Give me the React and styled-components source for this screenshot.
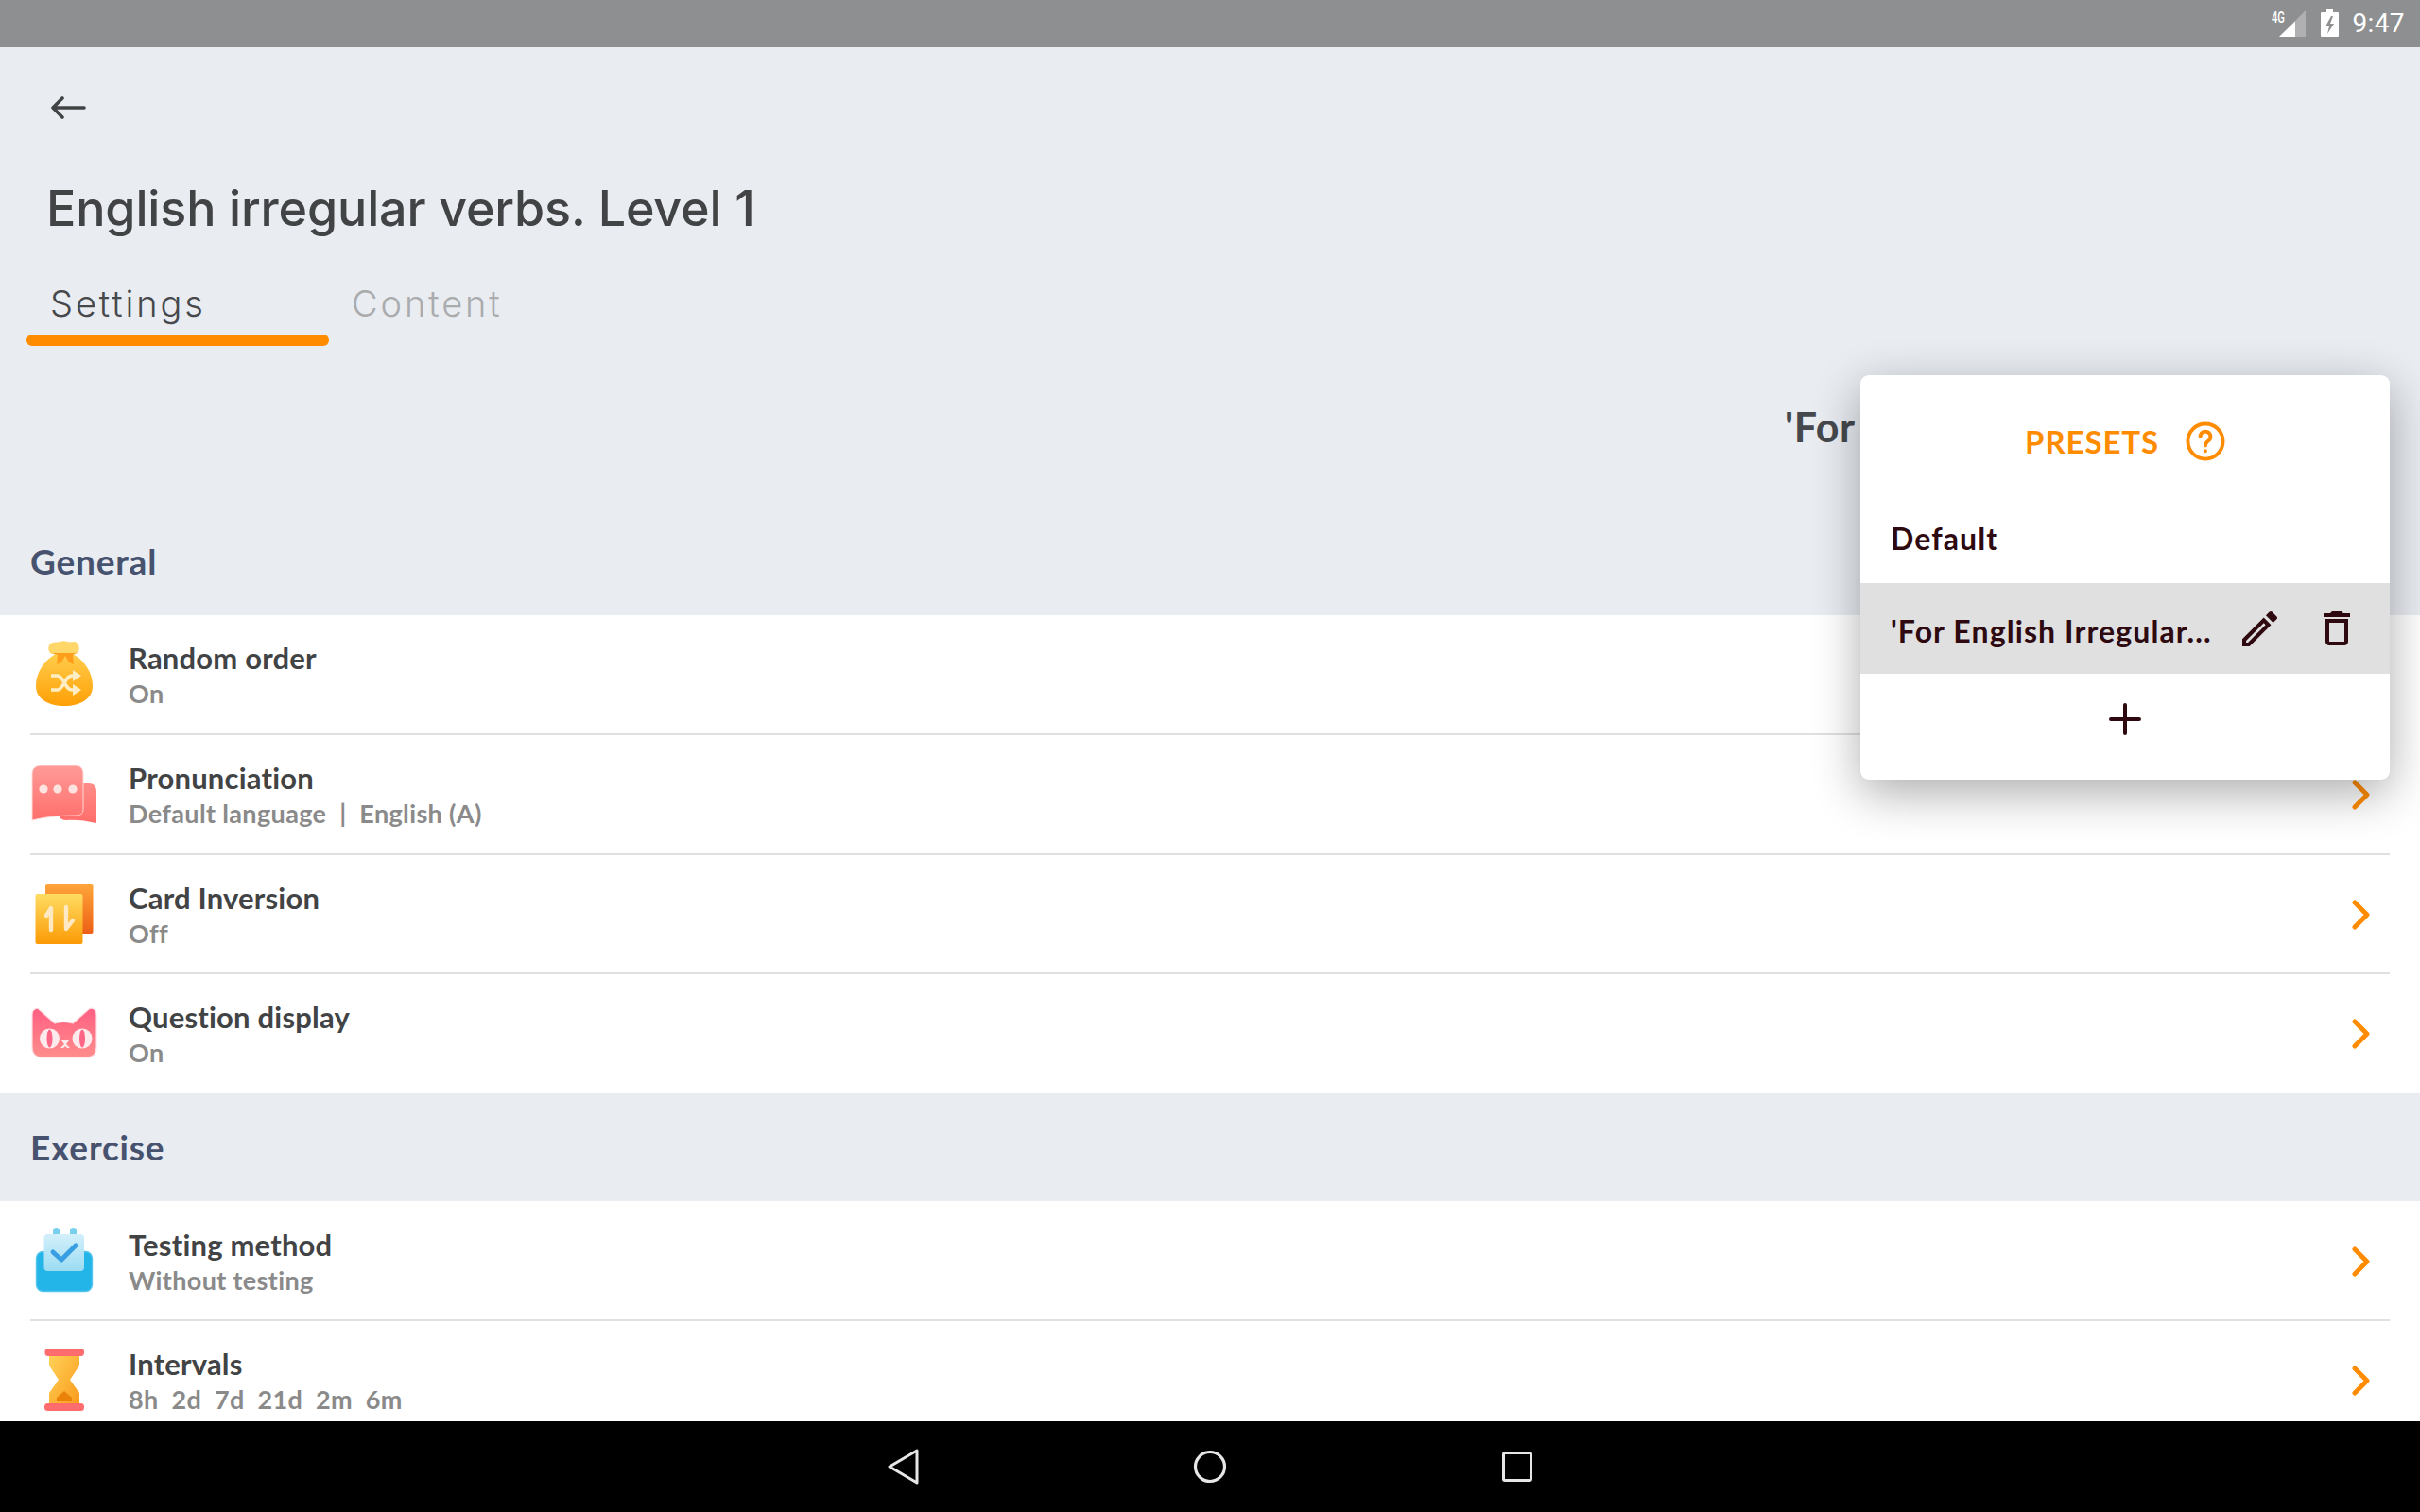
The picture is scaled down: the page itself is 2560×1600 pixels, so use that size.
import React from "react";
import styled, { createGlobalStyle } from "styled-components";

const Global = createGlobalStyle`
  html, body { margin: 0; padding: 0; background: #e9ecf1; }
  * { box-sizing: border-box; }
`;

const Screen = styled.div`
  width: 2560px;
  height: 1600px;
  display: flex;
  flex-direction: column;
  overflow: hidden;
  font-family: "Lato", "Noto Sans", sans-serif;
`;

const StatusBar = styled.div`
  height: 50px;
  flex: none;
  background: #8e8f91;
  display: flex;
  align-items: center;
  justify-content: flex-end;
  padding-right: 16px;
`;
const StatusIcons = styled.svg`
  display: block;
  margin-right: 13px;
`;
const Clock = styled.span`
  font: 400 28px/50px "Roboto", sans-serif;
  color: #fff;
  letter-spacing: 0.4px;
`;

const Main = styled.main`
  flex: 1;
  min-height: 0;
  position: relative;
  overflow: hidden;
  background: #e9ecf1;
`;

const Head = styled.header`
  height: 487px;
  display: flex;
  flex-direction: column;
`;
const BackButton = styled.div`
  padding: 52px 0 0 53px;
  height: 94px;
  svg { display: block; }
`;
const Title = styled.h1`
  margin: 45px 0 0 49px;
  font: 500 52px/64px "Inter", sans-serif;
  color: #414345;
  letter-spacing: -0.15px;
`;
const Tabs = styled.div`
  display: flex;
  margin: 45px 0 0 28px;
`;
const Tab = styled.div`
  width: 320px;
  height: 68px;
  display: flex;
  flex-direction: column;
  justify-content: space-between;
  font: 300 38px/46px "Inter", sans-serif;
  letter-spacing: 2.9px;
  color: ${(p) => (p.$active ? "#46484b" : "#a9abad")};
`;
const TabLabel = styled.span`
  padding-left: ${(p) => (p.$active ? 25 : 24)}px;
`;
const TabBar = styled.span`
  display: block;
  height: 12px;
  border-radius: 6px;
  background: #ff8c00;
`;
const PresetName = styled.div`
  margin: 58px 0 0 1888px;
  font: 700 43px/56px "Lato", sans-serif;
  letter-spacing: 0.6px;
  color: #45494d;
  white-space: nowrap;
`;

const SectionTitle = styled.h2`
  margin: 0;
  height: 114px;
  padding-left: 32px;
  display: flex;
  align-items: center;
  font: 700 37px/40px "Lato", sans-serif;
  letter-spacing: 0.8px;
  color: #47526f;
`;
const List = styled.div`
  background: #fff;
`;
const Row = styled.div`
  height: ${(p) => (p.$last ? "126px" : "126.75px")};
  padding: 0 32px;
  display: flex;
  align-items: center;
  position: relative;
  &::after {
    content: "";
    display: ${(p) => (p.$last ? "none" : "block")};
    position: absolute;
    left: 32px;
    right: 32px;
    bottom: 0;
    height: 2px;
    background: #e0e0e0;
  }
`;
const IconSlot = styled.div`
  width: 104px;
  flex: none;
  svg { display: block; }
`;
const RowText = styled.div`
  flex: 1;
  min-width: 0;
`;
const RowTitle = styled.div`
  font: 700 31px/40px "Lato", sans-serif;
  letter-spacing: 0.2px;
  color: #414345;
`;
const RowSub = styled.div`
  font: 700 27px/36px "Lato", sans-serif;
  letter-spacing: 0.35px;
  color: #8a8a8a;
  white-space: pre;
`;
const Chevron = styled.svg`
  flex: none;
  display: block;
  margin-right: 20px;
`;

const Popup = styled.aside`
  position: absolute;
  left: 1968px;
  top: 347px;
  width: 560px;
  height: 428px;
  background: #fff;
  border-radius: 9px;
  box-shadow: 0 14px 50px rgba(0, 0, 0, 0.33);
  display: flex;
  flex-direction: column;
`;
const PopupHead = styled.div`
  height: 126px;
  padding-top: 14px;
  display: flex;
  align-items: center;
  justify-content: center;
  gap: 28px;
  font: 700 33px/40px "Lato", sans-serif;
  letter-spacing: 0.9px;
  color: #ff8c00;
`;
const PresetRow = styled.div`
  height: ${(p) => p.$h}px;
  padding: 0 42px 0 32px;
  display: flex;
  align-items: center;
  background: ${(p) => (p.$selected ? "#e0e0e0" : "transparent")};
  font: 700 32px/40px "Lato", sans-serif;
  letter-spacing: 1.1px;
  color: #2e0a10;
`;
const PresetLabel = styled.span`
  flex: 1;
  min-width: 0;
  white-space: nowrap;
  padding-top: ${(p) => (p.$drop ? 6 : 0)}px;
`;
const ActionIcon = styled.svg`
  display: block;
  flex: none;
  margin-left: ${(p) => p.$ml}px;
`;
const AddRow = styled.div`
  flex: 1;
  display: flex;
  align-items: flex-start;
  justify-content: center;
  padding-top: 31px;
`;

const NavBar = styled.nav`
  height: 96px;
  flex: none;
  background: #000;
  display: flex;
  align-items: center;
  justify-content: center;
  gap: 290px;
`;

const Bag = () => (
  <svg width="72" height="72" viewBox="0 0 72 72">
    <defs>
      <linearGradient id="bag" x1="0" y1="0" x2="0" y2="1">
        <stop offset="0" stopColor="#ffd050" />
        <stop offset="1" stopColor="#ff9f05" />
      </linearGradient>
    </defs>
    <path d="M36 11C20 14 6 30 6 48c0 14 14 21 30 21s30-7 30-21C66 30 52 14 36 11z" fill="url(#bag)" />
    <path d="M24 2c3-1 5 0 7-1 3-1 6-1 8 0 3 1 5 0 8 0 5 1 6 9 3 12-7 3-24 3-29 0-3-4-2-10 3-11z" fill="#ffd768" />
    <path d="M23 13h26l-4 2 1 10-5-2-4-7-4 7-5 2 1-10z" fill="#ff9e1a" />
    <g fill="none" stroke="#ffeec4" strokeWidth="3.6">
      <path d="M22 37h7c6 0 8 15 15 15h4" />
      <path d="M22 52h7c6 0 8-15 15-15h4" />
    </g>
    <path d="M45 31l9 6-9 6zM45 46l9 6-9 6z" fill="#ffeec4" />
  </svg>
);
const Bubbles = () => (
  <svg width="72" height="72" viewBox="0 0 72 72">
    <defs>
      <linearGradient id="bub1" x1="0" y1="0" x2="0" y2="1">
        <stop offset="0" stopColor="#ff9b98" />
        <stop offset="1" stopColor="#ff6f6c" />
      </linearGradient>
      <linearGradient id="bub2" x1="0" y1="0" x2="0" y2="1">
        <stop offset="0" stopColor="#ff8c88" />
        <stop offset="1" stopColor="#ff6d6a" />
      </linearGradient>
    </defs>
    <path d="M30 24h32c5 0 8 3 8 8v34c-12-3-24-4-32-3-5 0-8-3-8-8z" fill="url(#bub2)" />
    <path d="M12 5h35c6 0 9 3 9 9v37c0 5-3 7-8 7-15 0-30 1-46 5V14c0-6 4-9 10-9z" fill="url(#bub1)" stroke="#ffd9d6" strokeWidth="1" />
    <circle cx="14" cy="30" r="4.6" fill="#ffe3e1" />
    <circle cx="29" cy="30" r="4.6" fill="#ffe3e1" />
    <circle cx="45" cy="30" r="4.6" fill="#ffe3e1" />
  </svg>
);
const Cards = () => (
  <svg width="72" height="72" viewBox="0 0 72 72">
    <defs>
      <linearGradient id="cb" x1="0" y1="0" x2="0" y2="1">
        <stop offset="0" stopColor="#ffa63a" />
        <stop offset="1" stopColor="#ec5f16" />
      </linearGradient>
      <linearGradient id="cf" x1="0" y1="0" x2="0" y2="1">
        <stop offset="0" stopColor="#ffdc62" />
        <stop offset="1" stopColor="#fb9a05" />
      </linearGradient>
    </defs>
    <rect x="16" y="3" width="50.5" height="53" rx="2" fill="url(#cb)" />
    <rect x="5.5" y="14" width="50" height="53" rx="2" fill="url(#cf)" />
    <path d="M17 37l5-8v23" fill="none" stroke="#ffe9c4" strokeWidth="4.4" strokeLinecap="round" strokeLinejoin="round" />
    <path d="M38 28v23l7-9" fill="none" stroke="#ffe9c4" strokeWidth="4.4" strokeLinecap="round" strokeLinejoin="round" />
  </svg>
);
const Cat = () => (
  <svg width="72" height="72" viewBox="0 0 72 72">
    <defs>
      <linearGradient id="cat" x1="0" y1="0" x2="0" y2="1">
        <stop offset="0" stopColor="#ff5f82" />
        <stop offset="1" stopColor="#ff8d8b" />
      </linearGradient>
    </defs>
    <path d="M5 10c1-1 3-1 4 0l17 15c6-2 13-2 19 0L62 10c2-1 4-1 5 0 2 1 3 3 3 6v34c0 7-4 11-11 11H13C6 61 2 57 2 50V16c0-3 1-5 3-6z" fill="url(#cat)" stroke="#ffdde2" strokeWidth="1.2" />
    <ellipse cx="20.5" cy="41" rx="10.5" ry="10.5" fill="#fdeaec" />
    <ellipse cx="55" cy="41" rx="10.5" ry="10.5" fill="#fdeaec" />
    <ellipse cx="20.5" cy="41" rx="3" ry="9.5" fill="#ff6685" />
    <ellipse cx="55" cy="41" rx="3" ry="9.5" fill="#ff6685" />
    <path d="M33 43h8l-3 4 4 4h-3l-2-2-2 2h-3l4-4z" fill="#fdeaec" />
  </svg>
);
const Clipboard = () => (
  <svg width="72" height="72" viewBox="0 0 72 72">
    <defs>
      <linearGradient id="pap" x1="0" y1="0" x2="0" y2="1">
        <stop offset="0" stopColor="#d3f0fa" />
        <stop offset="1" stopColor="#9bdcf3" />
      </linearGradient>
    </defs>
    <rect x="24" y="0" width="7" height="12" rx="3.5" fill="#79d0ee" />
    <rect x="42" y="0" width="7" height="12" rx="3.5" fill="#79d0ee" />
    <rect x="6.5" y="25.5" width="59" height="42" rx="7" fill="#23b5e8" stroke="#54c6ee" strokeWidth="1.4" />
    <rect x="14.5" y="7" width="42.5" height="39" rx="4" fill="url(#pap)" />
    <path d="M24 26l9 8 15-15" fill="none" stroke="#3a9fe2" strokeWidth="5" strokeLinecap="round" strokeLinejoin="round" />
  </svg>
);
const Hourglass = () => (
  <svg width="72" height="72" viewBox="0 0 72 72">
    <defs>
      <linearGradient id="gl" x1="0" y1="0" x2="1" y2="1">
        <stop offset="0" stopColor="#ffd258" />
        <stop offset="1" stopColor="#f99a1c" />
      </linearGradient>
    </defs>
    <path d="M20 8h32v12l-10 15 10 14v14H20V49l10-14-10-15z" fill="url(#gl)" />
    <path d="M28 54l8-7 8 7v4H28z" fill="#ea8209" />
    <rect x="15.5" y="2" width="41.5" height="8" rx="3.5" fill="#ff6c6e" />
    <rect x="15" y="60" width="42" height="8" rx="3.5" fill="#ff6c6e" />
  </svg>
);

const ChevronIcon = () => (
  <Chevron width="20" height="32" viewBox="0 0 20 32">
    <path d="M3 3l13 13L3 29" fill="none" stroke="#ff8c00" strokeWidth="5" strokeLinecap="round" strokeLinejoin="round" />
  </Chevron>
);

const groups = [
  {
    title: "General",
    rows: [
      { icon: <Bag />, title: "Random order", sub: "On" },
      { icon: <Bubbles />, title: "Pronunciation", sub: "Default language  |  English (A)" },
      { icon: <Cards />, title: "Card Inversion", sub: "Off" },
      { icon: <Cat />, title: "Question display", sub: "On" },
    ],
  },
  {
    title: "Exercise",
    rows: [
      { icon: <Clipboard />, title: "Testing method", sub: "Without testing" },
      { icon: <Hourglass />, title: "Intervals", sub: "8h  2d  7d  21d  2m  6m" },
    ],
  },
];

export default function App() {
  return (
    <Screen>
      <Global />
      <StatusBar>
        <StatusIcons width="72" height="50" viewBox="0 -10 72 50">
          <path d="M36 1v28H8z" fill="#fff" fillOpacity="0.3" />
          <path d="M25 12.5V29H8z" fill="#fff" />
          <text x="0" y="14" fontFamily="Roboto, sans-serif" fontSize="17" fontWeight="500" fill="#fff" textLength="14" lengthAdjust="spacingAndGlyphs">4G</text>
          <path d="M53 4h5V1h7v3h5a1 1 0 0 1 1 1v24a1 1 0 0 1-1 1H53a1 1 0 0 1-1-1V5a1 1 0 0 1 1-1z" fill="#fff" transform="translate(0 -1)" />
          <path d="M63 7l-6 11h4l-2 8 7-11h-4l3-8z" fill="#8e8f91" />
        </StatusIcons>
        <Clock>9:47</Clock>
      </StatusBar>
      <Main>
        <Head>
          <BackButton>
            <svg width="38" height="24" viewBox="0 0 38 24">
              <path d="M13 2L3 12l10 10M3 12h33" fill="none" stroke="#414345" strokeWidth="3.6" strokeLinecap="round" strokeLinejoin="round" />
            </svg>
          </BackButton>
          <Title>English irregular verbs. Level 1</Title>
          <Tabs>
            <Tab $active>
              <TabLabel $active>Settings</TabLabel>
              <TabBar />
            </Tab>
            <Tab>
              <TabLabel>Content</TabLabel>
            </Tab>
          </Tabs>
          <PresetName>'For English Irregular Verbs'</PresetName>
        </Head>
        {groups.map((g) => (
          <section key={g.title}>
            <SectionTitle>{g.title}</SectionTitle>
            <List>
              {g.rows.map((r, i) => (
                <Row key={r.title} $last={i === g.rows.length - 1}>
                  <IconSlot>{r.icon}</IconSlot>
                  <RowText>
                    <RowTitle>{r.title}</RowTitle>
                    <RowSub>{r.sub}</RowSub>
                  </RowText>
                  <ChevronIcon />
                </Row>
              ))}
            </List>
          </section>
        ))}
        <Popup>
          <PopupHead>
            <span>PRESETS</span>
            <svg width="42" height="42" viewBox="0 0 24 24" fill="none" stroke="#ff8c00" strokeWidth="2.2" strokeLinecap="round">
              <circle cx="12" cy="12" r="10.6" />
              <path d="M8.9 9.2a3.1 3.1 0 1 1 4.9 2.5c-1 .8-1.8 1.3-1.8 2.8" />
              <path d="M12 17.8v.1" />
            </svg>
          </PopupHead>
          <PresetRow $h={94}>
            <PresetLabel>Default</PresetLabel>
          </PresetRow>
          <PresetRow $h={96} $selected>
            <PresetLabel $drop>'For English Irregular...</PresetLabel>
            <ActionIcon width="37" height="37" viewBox="3 3 18 18" fill="#2e0a10" $ml={0}>
              <path d="M3 17.25V21h3.75L17.81 9.94l-3.75-3.75L3 17.25zM5.92 19H5v-.92l9.06-9.06.92.92L5.92 19zM20.71 7.04c.39-.39.39-1.02 0-1.41l-2.34-2.34c-.2-.2-.45-.29-.71-.29s-.51.1-.7.29l-1.83 1.83 3.75 3.75 1.83-1.83z" />
            </ActionIcon>
            <ActionIcon width="28" height="36" viewBox="5 3 14 18" preserveAspectRatio="none" fill="#2e0a10" $ml={49}>
              <path d="M6 19c0 1.1.9 2 2 2h8c1.1 0 2-.9 2-2V7H6v12zM8 9h8v10H8V9zm7.5-5l-1-1h-5l-1 1H5v2h14V4z" />
            </ActionIcon>
          </PresetRow>
          <AddRow>
            <svg width="34" height="34" viewBox="0 0 34 34">
              <path d="M17 2v30M2 17h30" stroke="#2e0a10" strokeWidth="4" strokeLinecap="round" />
            </svg>
          </AddRow>
        </Popup>
      </Main>
      <NavBar>
        <svg width="34" height="38" viewBox="0 0 34 38">
          <path d="M32 2v34L3 19z" fill="none" stroke="#e6e6e6" strokeWidth="3" strokeLinejoin="round" />
        </svg>
        <svg width="36" height="36" viewBox="0 0 36 36">
          <circle cx="18" cy="18" r="15.5" fill="none" stroke="#e6e6e6" strokeWidth="3.2" />
        </svg>
        <svg width="34" height="34" viewBox="0 0 34 34">
          <rect x="2.5" y="2.5" width="29" height="29" rx="1.5" fill="none" stroke="#e6e6e6" strokeWidth="3" />
        </svg>
      </NavBar>
    </Screen>
  );
}
